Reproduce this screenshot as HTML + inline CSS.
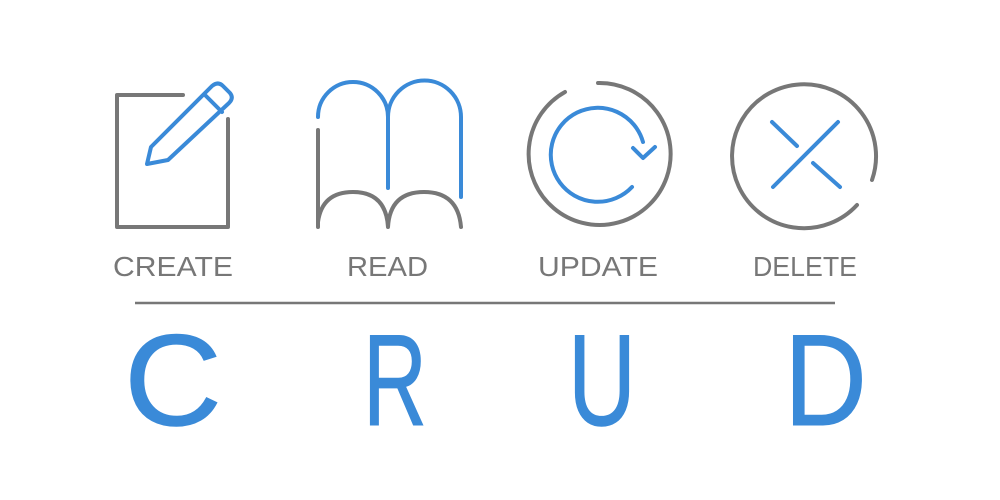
<!DOCTYPE html>
<html><head><style>html,body{margin:0;padding:0;background:#fff}svg{display:block}</style></head>
<body>
<svg width="1000" height="500" viewBox="0 0 1000 500" xmlns="http://www.w3.org/2000/svg">
<g fill="none" stroke-linecap="round" stroke-linejoin="round">
  <!-- CREATE -->
  <path d="M183 95 H117 V227 H228 V119" stroke="#777" stroke-width="4"/>
  <path d="M147 164 L151 147 L212 86 Q218 81 223 86 L230 93 Q234 98 229 103 L168 160 Z M204 94 L222 112" stroke="#3a8ad8" stroke-width="4"/>
  <!-- READ -->
  <path d="M318 117 A35 35 0 0 1 388 117 V188 M388 117 A36.5 36.5 0 0 1 461 117 V197" stroke="#3a8ad8" stroke-width="4"/>
  <path d="M318 130 V227 M318 222 Q322 192 353 192 Q386 192 388 227 Q390 192 424 192 Q458 192 461 227" stroke="#777" stroke-width="4"/>
  <!-- UPDATE -->
  <path d="M598 83 A71 71 0 1 1 565 92" stroke="#777" stroke-width="4"/>
  <path d="M632 187 A47 47 0 1 1 643 142" stroke="#3a8ad8" stroke-width="4"/>
  <path d="M633 148 L643 158 L655 147" stroke="#3a8ad8" stroke-width="4"/>
  <!-- DELETE -->
  <path d="M857 205 A72 72 0 1 1 872 180" stroke="#777" stroke-width="4"/>
  <path d="M838 122 L773 187 M772 122 L797 146 M813 163 L840 187" stroke="#3a8ad8" stroke-width="4"/>
  <!-- line -->
  <path d="M135 303 H835" stroke="#777" stroke-width="2.5" stroke-linecap="butt"/>
</g>
<g font-family="Liberation Sans, sans-serif" font-size="28" fill="#777">
  <text x="113" y="276" textLength="120" lengthAdjust="spacingAndGlyphs">CREATE</text>
  <text x="347" y="276" textLength="81" lengthAdjust="spacingAndGlyphs">READ</text>
  <text x="538" y="276" textLength="120" lengthAdjust="spacingAndGlyphs">UPDATE</text>
  <text x="753" y="276" textLength="104" lengthAdjust="spacingAndGlyphs">DELETE</text>
</g>
<g font-family="Liberation Sans, sans-serif" font-size="130" fill="#3a8ad8" stroke="#3a8ad8" stroke-width="1">
  <text x="124" y="425" textLength="98" lengthAdjust="spacingAndGlyphs">C</text>
  <text x="363" y="425" textLength="64" lengthAdjust="spacingAndGlyphs">R</text>
  <text x="568" y="425" textLength="68" lengthAdjust="spacingAndGlyphs">U</text>
  <text x="784" y="425" textLength="83" lengthAdjust="spacingAndGlyphs">D</text>
</g>
</svg>
</body></html>
